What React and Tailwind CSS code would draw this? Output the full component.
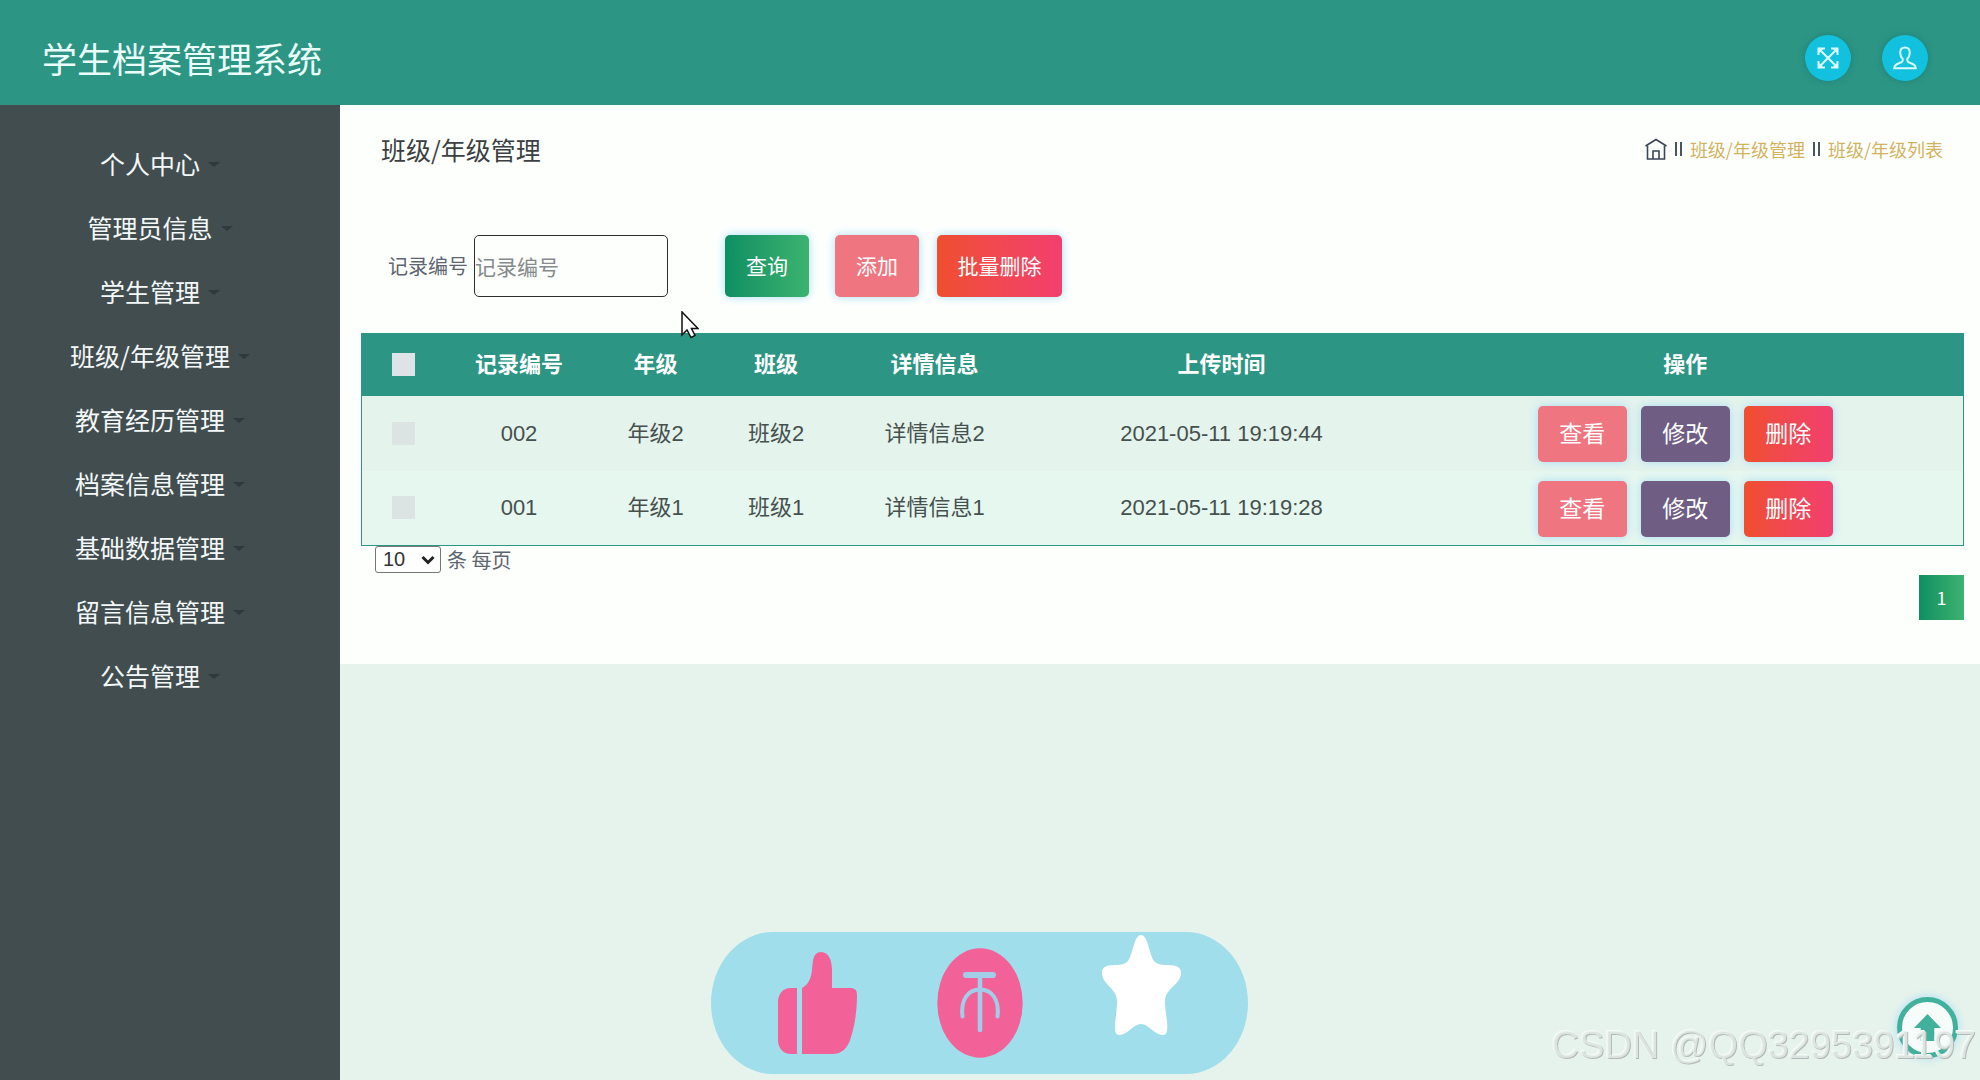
import React from "react";

const menuItems = [
  "个人中心",
  "管理员信息",
  "学生管理",
  "班级/年级管理",
  "教育经历管理",
  "档案信息管理",
  "基础数据管理",
  "留言信息管理",
  "公告管理",
];

const rows = [
  { id: "002", grade: "年级2", clazz: "班级2", detail: "详情信息2", time: "2021-05-11 19:19:44" },
  { id: "001", grade: "年级1", clazz: "班级1", detail: "详情信息1", time: "2021-05-11 19:19:28" },
];

const buttonColors = {
  green: "bg-linear-to-r from-[#0b8f62] to-[#3bb370]",
  pink: "bg-[#ef7680]",
  purple: "bg-[#705d83]",
  red: "bg-linear-to-r from-[#f04e2c] to-[#f23f6e]",
};

const ActionButton = ({ color, className, children }) => (
  <button
    type="button"
    className={`rounded-[5px] text-white shadow-[0_0_10px_#a9dcf5] ${buttonColors[color]} ${className}`}
  >
    {children}
  </button>
);

const Checkbox = ({ label, className }) => (
  <input
    type="checkbox"
    aria-label={label}
    className={`block size-[23px] mx-auto appearance-none ${className}`}
  />
);

const ExpandIcon = () => (
  <svg viewBox="0 0 24 24" className="size-6" fill="none" stroke="#d9fbff" strokeWidth="2">
    <path d="M3 3l18 18M21 3L3 21" />
    <path d="M2.500 9V2.500H9M15 2.500h6.500V9M21.500 15v6.500H15M9 21.500H2.500V15" />
    <path d="M3 3h4L3 7zM21 3v4l-4-4zM21 21h-4l4-4zM3 21v-4l4 4z" fill="#d9fbff" stroke="none" />
  </svg>
);

const UserIcon = () => (
  <svg viewBox="0 0 24 24" className="size-6" fill="none" stroke="#d9fbff" strokeWidth="2">
    <path d="M12 1.500c-3.400 0-4.800 2.300-4.800 5.300 0 2.600 1 4.700 2.600 6.200 0 3-1 3.200-3.800 4.200-3 1-4.600 2.200-4.800 5h21.600c-.2-2.800-1.800-4-4.800-5-2.800-1-3.800-1.200-3.800-4.200 1.600-1.500 2.600-3.600 2.600-6.200 0-3-1.400-5.300-4.800-5.300z" />
  </svg>
);

const HomeIcon = () => (
  <svg viewBox="0 0 22 22" className="size-[22px]" fill="none" stroke="#3a4656" strokeWidth="1.6">
    <path d="M0.500 8L11 1.500 21.500 8" />
    <path d="M2.500 7.500v13.500h17V7.500" />
    <path d="M8 21V13h6v8" />
  </svg>
);

const Separator = () => (
  <span className="flex gap-[3px]" aria-hidden="true">
    <span className="h-[14px] w-[2px] bg-[#4a5560]" />
    <span className="h-[14px] w-[2px] bg-[#4a5560]" />
  </span>
);

const Header = () => (
  <header className="flex h-[105px] items-center justify-between bg-[#2d9584] pl-[42px] pr-[52px] pt-[11px]">
    <h1 className="text-[35px] leading-[50px] text-[#eafffb]">学生档案管理系统</h1>
    <div className="flex gap-[31px]">
      <button
        type="button"
        aria-label="全屏"
        className="flex size-[46px] items-center justify-center rounded-full bg-[#12c1dd] shadow-[0_0_6px_#1d7f78]"
      >
        <ExpandIcon />
      </button>
      <button
        type="button"
        aria-label="用户"
        className="flex size-[46px] items-center justify-center rounded-full bg-[#12c1dd] shadow-[0_0_6px_#1d7f78]"
      >
        <UserIcon />
      </button>
    </div>
  </header>
);

const Sidebar = () => (
  <nav className="w-[340px] shrink-0 bg-[#424d50] pt-[27px]">
    <ul>
      {menuItems.map((item) => (
        <li key={item}>
          <a href="#" className="flex h-16 items-center justify-center gap-2 pr-5 text-[25px] text-[#f4f8f8]">
            {item}
            <span className="border-x-[6px] border-t-[5px] border-x-transparent border-t-[#2f3a3c]" />
          </a>
        </li>
      ))}
    </ul>
  </nav>
);

const Breadcrumb = () => (
  <div className="flex items-center gap-2 text-[18px] leading-[26px]">
    <a href="#" aria-label="首页">
      <HomeIcon />
    </a>
    <Separator />
    <a href="#" className="text-[#d3b25e]">班级/年级管理</a>
    <Separator />
    <a href="#" className="text-[#d3b25e]">班级/年级列表</a>
  </div>
);

const SearchBar = () => (
  <form className="mt-[68px] flex items-center pl-[27px]">
    <label htmlFor="recordNo" className="w-[86px] text-[20px] text-[#5d6570]">记录编号</label>
    <input
      id="recordNo"
      type="text"
      placeholder="记录编号"
      className="h-[62px] w-[194px] rounded-[5px] border border-[#2f2f2f] text-[21px] placeholder:text-[#858a8c]"
    />
    <ActionButton color="green" className="ml-[57px] h-[62px] w-[84px] text-[21px]">查询</ActionButton>
    <ActionButton color="pink" className="ml-[26px] h-[62px] w-[84px] text-[21px]">添加</ActionButton>
    <ActionButton color="red" className="ml-[18px] h-[62px] w-[125px] text-[21px]">批量删除</ActionButton>
  </form>
);

const RecordTable = () => (
  <table className="mt-9 w-full table-fixed border border-[#2d9584] text-center font-['Liberation_Sans','Noto_Sans_CJK_SC',sans-serif] text-[22px] text-[#46504f]">
    <colgroup>
      <col className="w-[84px]" />
      <col className="w-[147px]" />
      <col className="w-[126px]" />
      <col className="w-[115px]" />
      <col className="w-[202px]" />
      <col className="w-[372px]" />
      <col />
    </colgroup>
    <thead>
      <tr className="h-[62px] bg-[#2d9584] text-white">
        <th>
          <Checkbox label="全选" className="bg-[#dde3e6]" />
        </th>
        <th>记录编号</th>
        <th>年级</th>
        <th>班级</th>
        <th>详情信息</th>
        <th>上传时间</th>
        <th>操作</th>
      </tr>
    </thead>
    <tbody>
      {rows.map((row) => (
        <tr key={row.id} className="h-[75px] odd:bg-[#e4f3ec] even:bg-[#e6f7ef]">
          <td>
            <Checkbox label={`选择 ${row.id}`} className="bg-[#dce3e3]" />
          </td>
          <td>{row.id}</td>
          <td>{row.grade}</td>
          <td>{row.clazz}</td>
          <td>{row.detail}</td>
          <td>{row.time}</td>
          <td>
            <div className="flex justify-center gap-[14px] pt-[2px]">
              <ActionButton color="pink" className="h-14 w-[89px] text-[23px]">查看</ActionButton>
              <ActionButton color="purple" className="h-14 w-[89px] text-[23px]">修改</ActionButton>
              <ActionButton color="red" className="h-14 w-[89px] text-[23px]">删除</ActionButton>
            </div>
          </td>
        </tr>
      ))}
    </tbody>
  </table>
);

const Pagination = () => (
  <>
    <div className="flex items-center gap-[6px] pl-[14px] text-[20px] leading-[27px] text-[#5d6570]">
      <div className="relative">
        <select
          id="pageSize"
          className="block h-[27px] w-[66px] appearance-none rounded-[3px] border border-[#767676] bg-white pl-[7px] font-['Liberation_Sans',sans-serif] text-[20px] leading-[25px] text-[#333]"
        >
          <option>10</option>
        </select>
        <svg
          viewBox="0 0 14 10"
          className="pointer-events-none absolute right-[6px] top-[9px] h-[10px] w-[14px]"
          fill="none"
          stroke="#222"
          strokeWidth="3"
        >
          <path d="M1.500 2L7 7.500 12.500 2" />
        </svg>
      </div>
      <label htmlFor="pageSize">条 每页</label>
    </div>
    <div className="flex justify-end">
      <button
        type="button"
        className="mt-[2px] size-[45px] bg-linear-to-r from-[#0b8f62] to-[#3bb370] text-[18px] text-white"
      >
        1
      </button>
    </div>
  </>
);

const ReactionPill = () => (
  <svg viewBox="0 0 537 142" className="fixed bottom-[6px] left-[711px] h-[142px] w-[537px]">
    <rect width="537" height="142" rx="62" ry="71" fill="#a0deec" />
    <g fill="#f36199">
      <path d="M86 56h-6c-8 0-13 6-13 14v38c0 8 5 14 13 14h6z" />
      <path d="M91 56c7-4 9-10 10-18 1-6 0-18 9-18 8 0 11 9 11 18v18h18c5 0 7 2 7 7 0 14-2 30-6 42-3 11-9 17-19 17H91z" />
      <ellipse cx="269" cy="71" rx="42.700" ry="54.700" />
    </g>
    <g fill="none" stroke="#a2cde9" strokeLinecap="round">
      <path d="M255 43h27" strokeWidth="6" />
      <path d="M269 44v54" strokeWidth="4.500" />
      <path d="M251.500 84.500c-2-16 5-27 17.500-27s19.500 11 17.500 27" strokeWidth="4" />
    </g>
    <path
      fill="#fff"
      d="M430 3c7 0 8 19 13 26 6 8 27-1 27 12 0 11-15 15-16 27-1 10 7 35-2 35-9 0-14-11-22-11s-13 11-22 11c-8 0-1-25-2-35-1-12-15-16-15-27 0-13 20-4 26-12 5-7 6-26 13-26z"
    />
  </svg>
);

const BackToTop = () => (
  <button
    type="button"
    aria-label="回到顶部"
    className="fixed bottom-[22px] right-[22px] flex size-[61px] items-center justify-center rounded-full border-[5px] border-[#41b09c] bg-[#f6fcfa] shadow-[0_0_10px_#a9dcf5]"
  >
    <svg viewBox="0 0 28 28" className="size-[27px]" fill="#41b09c">
      <path d="M14 0l14 14.500h-7V28H7V14.500H0z" />
    </svg>
  </button>
);

const Cursor = () => (
  <svg viewBox="0 0 18 28" className="pointer-events-none fixed left-[681px] top-[311px] h-7 w-[18px]">
    <path
      d="M1 1v23l5-5 4 7.500 4-2-3.500-7H17z"
      fill="#fff"
      stroke="#111"
      strokeWidth="1.500"
    />
  </svg>
);

const App = () => {
  return (
    <div className="flex min-h-screen flex-col bg-[#e6f3ec] font-['Noto_Sans_CJK_SC',sans-serif]">
      <Header />
      <div className="flex flex-1">
        <Sidebar />
        <main className="flex-1">
          <section className="bg-[#fdfffd] pl-[21px] pr-4 pt-[26px] pb-11">
            <div className="flex items-center justify-between pl-5 pr-[21px]">
              <h2 className="text-[25px] leading-9 text-[#3b3f42]">班级/年级管理</h2>
              <Breadcrumb />
            </div>
            <SearchBar />
            <RecordTable />
            <Pagination />
          </section>
        </main>
      </div>
      <ReactionPill />
      <BackToTop />
      <Cursor />
      <p className="pointer-events-none fixed bottom-[13px] right-1 font-['Liberation_Sans',sans-serif] text-[38px] leading-[44px] text-[#e6efeb]/80 [text-shadow:1px_1px_0_#b4b9b7,-1px_-1px_0_#f6faf8]">
        CSDN @QQ3295391197
      </p>
    </div>
  );
};

export default App;
